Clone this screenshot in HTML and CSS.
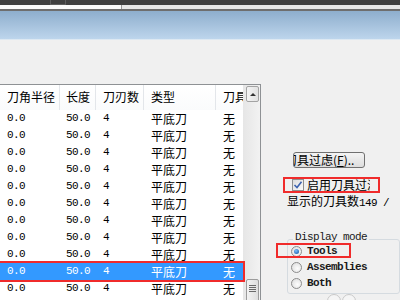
FILE: index.html
```html
<!DOCTYPE html>
<html>
<head>
<meta charset="utf-8">
<title>刀具库</title>
<link rel="stylesheet" href="styles.css">
</head>
<body>
<div class="topbar"><span class="tab"></span></div>
<div class="addrbar"><div class="addrLeft"></div><div class="addrRight"></div></div>
<div class="banner"></div>

<div class="main">
  <!-- tool list -->
  <div class="list">
    <div class="listInner">
      <div class="hdr">
        <div class="c c1">刀角半径</div>
        <div class="c c2">长度</div>
        <div class="c c3">刀刃数</div>
        <div class="c c4">类型</div>
        <div class="c c5">刀具</div>
      </div>
      <div class="row"><div class="c c1 num">0.0</div><div class="c c2 num">50.0</div><div class="c c3 num">4</div><div class="c c4">平底刀</div><div class="c c5">无</div></div>
      <div class="row"><div class="c c1 num">0.0</div><div class="c c2 num">50.0</div><div class="c c3 num">4</div><div class="c c4">平底刀</div><div class="c c5">无</div></div>
      <div class="row"><div class="c c1 num">0.0</div><div class="c c2 num">50.0</div><div class="c c3 num">4</div><div class="c c4">平底刀</div><div class="c c5">无</div></div>
      <div class="row"><div class="c c1 num">0.0</div><div class="c c2 num">50.0</div><div class="c c3 num">4</div><div class="c c4">平底刀</div><div class="c c5">无</div></div>
      <div class="row"><div class="c c1 num">0.0</div><div class="c c2 num">50.0</div><div class="c c3 num">4</div><div class="c c4">平底刀</div><div class="c c5">无</div></div>
      <div class="row"><div class="c c1 num">0.0</div><div class="c c2 num">50.0</div><div class="c c3 num">4</div><div class="c c4">平底刀</div><div class="c c5">无</div></div>
      <div class="row"><div class="c c1 num">0.0</div><div class="c c2 num">50.0</div><div class="c c3 num">4</div><div class="c c4">平底刀</div><div class="c c5">无</div></div>
      <div class="row"><div class="c c1 num">0.0</div><div class="c c2 num">50.0</div><div class="c c3 num">4</div><div class="c c4">平底刀</div><div class="c c5">无</div></div>
      <div class="row"><div class="c c1 num">0.0</div><div class="c c2 num">50.0</div><div class="c c3 num">4</div><div class="c c4">平底刀</div><div class="c c5">无</div></div>
      <div class="row sel"><div class="c c1 num">0.0</div><div class="c c2 num">50.0</div><div class="c c3 num">4</div><div class="c c4">平底刀</div><div class="c c5">无</div><span class="mark markRow"></span></div>
      <div class="row"><div class="c c1 num">0.0</div><div class="c c2 num">50.0</div><div class="c c3 num">4</div><div class="c c4">平底刀</div><div class="c c5">无</div></div>
    </div>
    <div class="vscroll">
      <div class="sbUp"><span class="arrowUp"></span></div>
      <div class="sbTrack"></div>
      <div class="sbThumb"><div class="grip"></div></div>
    </div>
  </div>

  <!-- right side options -->
  <div class="side">
    <div class="btn"><span class="btnText">刀具过虑(<u>F</u>)..</span></div>
    <div class="chkRow">
      <span class="cbox"><svg width="10" height="10" viewBox="0 0 10 10"><path d="M1.5 5 L4 7.5 L8.5 1.8" fill="none" stroke="#3d63b0" stroke-width="1.6"/></svg></span>
      <span class="chkLabel">启用刀具过滤</span>
      <span class="mark"></span>
    </div>
    <div class="count">显示的刀具数<span class="asc">149 /</span></div>
    <div class="group">
      <div class="legend">Display mode</div>
      <div class="radio"><span class="rb on"></span>Tools<span class="mark markTools"></span></div>
      <div class="radio"><span class="rb"></span>Assemblies</div>
      <div class="radio"><span class="rb"></span>Both</div>
      <div class="dots"><span class="dot"></span><span class="dot"></span></div>
    </div>
  </div>
</div>
</body>
</html>
```

FILE: styles.css
```css
body { margin:0; padding:0; width:400px; height:300px; overflow:hidden; background:#f0f0f0; color:#000; font-family:"Noto Sans CJK SC", sans-serif; font-size:12px; }

.topbar { height:5px; background:#404040; }
.tab { display:block; margin-left:50px; width:16px; height:5px; border:1px solid #5e5e5e; border-top:none; box-sizing:border-box; }
.addrbar { display:flex; height:4px; border-bottom:2px solid #6e6e6e; }
.addrLeft { width:121px; background:#fbfbfb; border-right:1px solid #9a9a9a; }
.addrRight { flex:1; background:#e8e8e8; }
.banner { height:28px; background:linear-gradient(#8eaecd, #bdd5ec); border-bottom:1px solid #dde8f2; }

.main { display:flex; align-items:flex-start; margin-top:44px; }

/* list view */
.list { display:flex; margin-left:-1px; width:260px; height:240px; border:1px solid #8e9194; background:#fff; }
.listInner { width:243px; }
.hdr { display:flex; height:25px; background:linear-gradient(#ffffff, #fafbfc); }
.hdr .c { height:25px; line-height:24px; border-right:1px solid #e3e6ea; }
.hdr .c5 { border-right:none; overflow:hidden; white-space:nowrap; }
.c { box-sizing:border-box; padding-left:7px; }
.c1 { width:60px; }
.c2 { width:36px; padding-left:6px; }
.c3 { width:48px; }
.c4 { width:72px; }
.c5 { width:27px; }
.row { display:flex; align-items:center; height:17px; line-height:17px; }
.num { font-family:"Liberation Mono", monospace; font-size:11px; letter-spacing:-0.6px; }
.sel { position:relative; z-index:2; background:#3399ff; color:#fff; }

.mark { position:absolute; left:0; top:0; right:0; bottom:0; border:2px solid #f02b2b; }
.markRow { left:-5px; right:-2px; top:-2px; bottom:-2px; }

/* scrollbar */
.vscroll { width:17px; display:flex; flex-direction:column; background:linear-gradient(90deg, #e6e6e6, #f2f2f2); }
.sbUp { margin:1px 1px 0 3px; height:16px; box-sizing:border-box; border:1px solid #a3a3a3; border-radius:2px; background:linear-gradient(90deg, #f4f4f4, #e2e2e2); display:flex; align-items:center; justify-content:center; }
.arrowUp { width:0; height:0; border-left:3px solid transparent; border-right:3px solid transparent; border-bottom:3px solid #333; }
.sbTrack { height:177px; }
.sbThumb { margin:0 1px 0 3px; height:40px; box-sizing:border-box; border:1px solid #9c9c9c; border-radius:2px; background:linear-gradient(90deg, #f3f3f3, #dedede); }
.grip { width:7px; height:7px; margin:5px auto 0; background:repeating-linear-gradient(#6a6a6a 0 1px, transparent 1px 2px); }

/* right side */
.side { flex:1; padding-top:68px; }
.btn { margin-left:32px; width:72px; height:16px; box-sizing:border-box; border:1px solid #707070; border-radius:3px; background:linear-gradient(#f4f4f4, #dddddd); overflow:hidden; white-space:nowrap; line-height:14px; }
.btnText { display:inline-block; margin-left:-9px; }
.btnText u { text-decoration:underline; }
.chkRow { position:relative; display:flex; align-items:center; margin:9px 0 0 22px; width:97px; height:16px; padding-left:9px; box-sizing:border-box; }
.cbox { display:flex; align-items:center; justify-content:center; width:12px; height:12px; box-sizing:border-box; border:1px solid #8e8f8f; background:linear-gradient(135deg, #dcdcdc, #fbfbfb); }
.chkLabel { margin-left:3px; width:63px; overflow:hidden; white-space:nowrap; line-height:16px; }
.count { margin:1px 0 0 26px; line-height:14px; white-space:nowrap; }
.asc { font-family:"Liberation Mono", monospace; font-size:11px; letter-spacing:-0.6px; }

.group { position:relative; margin:29px 0 0 26px; width:111px; padding-bottom:2px; border:1px solid #d5dbe0; border-radius:3px; font-family:"Liberation Mono", monospace; font-size:11px; font-weight:bold; letter-spacing:-0.6px; color:#1a1a1a; }
.legend { display:table; margin:-9px 0 0 5px; padding:0 2px; background:#f0f0f0; line-height:12px; font-weight:normal; }
.radio { position:relative; display:flex; align-items:center; height:16px; padding-left:3px; }
.radio:first-of-type { margin-top:3px; }
.rb { position:relative; width:11px; height:11px; margin-right:5px; box-sizing:border-box; border:1px solid #8c8c8c; border-radius:50%; background:radial-gradient(circle at 60% 60%, #fdfdfd, #d9d9d9); }
.rb.on:after { content:""; position:absolute; left:2px; top:2px; width:5px; height:5px; border-radius:50%; background:radial-gradient(circle at 40% 35%, #7cc2ff, #0b4f9e); }
.markTools { left:-12px; right:auto; width:75px; top:0; bottom:auto; height:15px; box-sizing:border-box; }
.dots { position:absolute; left:39px; top:54px; display:flex; gap:1px; }
.dot { width:12px; height:12px; border:1px solid #c9c9c9; border-radius:50%; background:#f5f5f5; }
```
